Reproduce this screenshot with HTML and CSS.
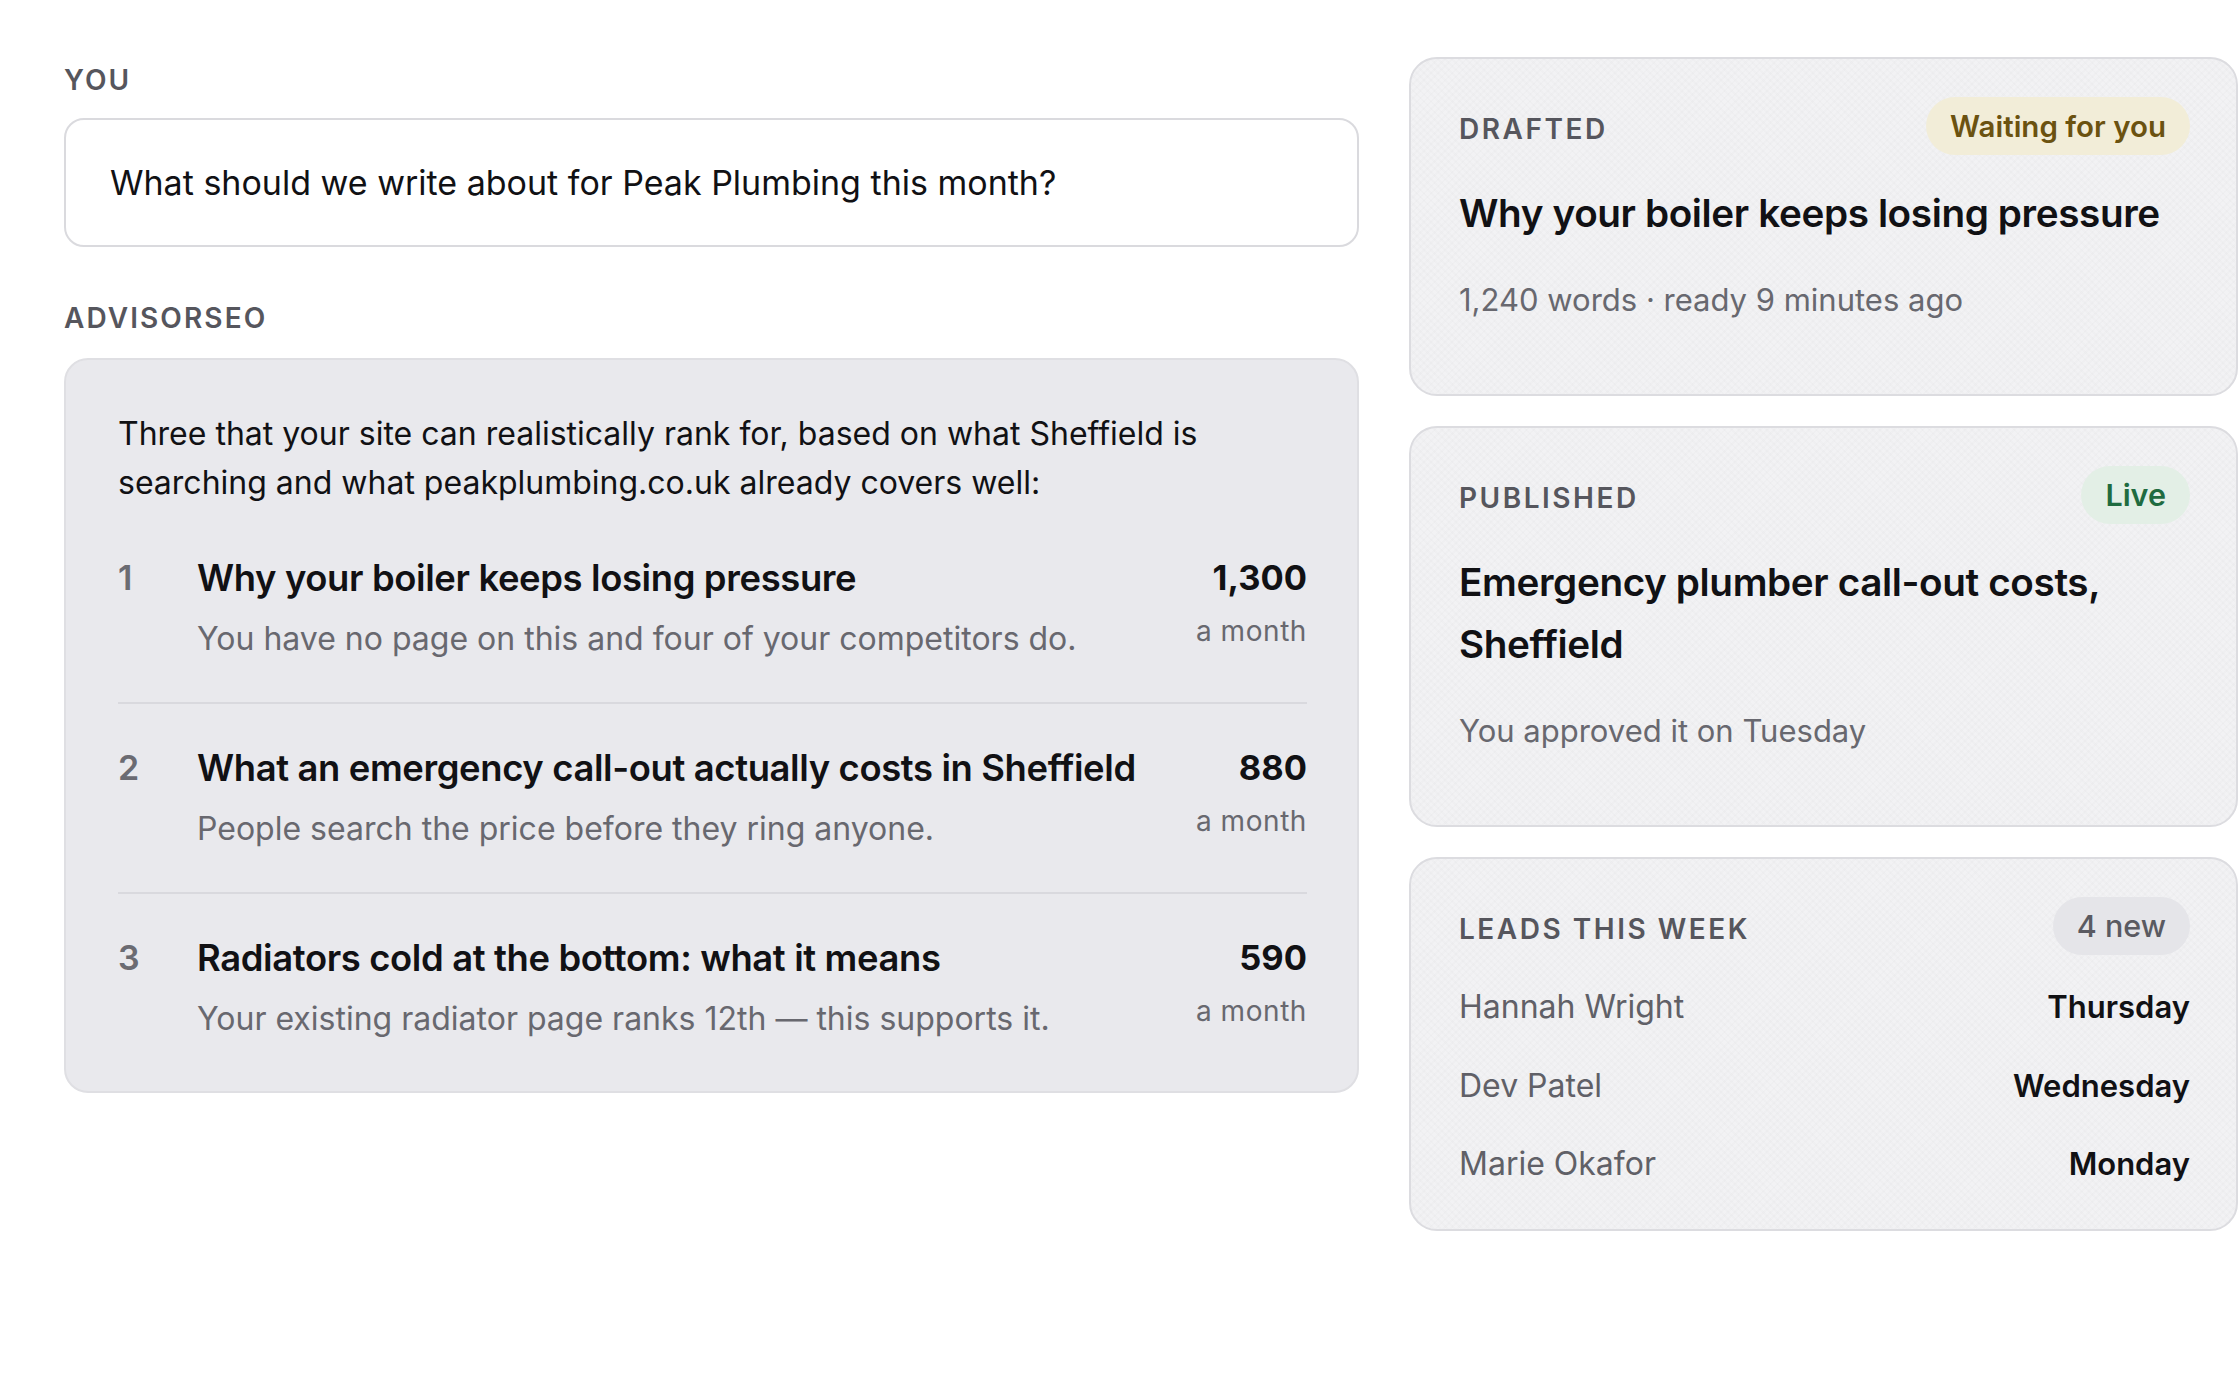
FILE: index.html
```html
<!DOCTYPE html>
<html lang="en">
<head>
    <meta charset="UTF-8">
    <meta name="viewport" content="width=device-width, initial-scale=1.0">
    <title>AdvisorSEO – Peak Plumbing</title>
    <link rel="stylesheet" href="styles.css">
</head>
<body>
    <div class="page">
        <main class="chat">
            <div class="who">You</div>
            <div class="bubble-you">What should we write about for Peak Plumbing this month?</div>

            <div class="who who-advisor">AdvisorSEO</div>
            <div class="bubble-advisor">
                <p class="intro">Three that your site can realistically rank for, based on what Sheffield is searching and what peakplumbing.co.uk already covers well:</p>
                <ol class="ideas">
                    <li class="idea">
                        <span class="idea-num">1</span>
                        <div class="idea-body">
                            <div class="idea-title">Why your boiler keeps losing pressure</div>
                            <div class="idea-note">You have no page on this and four of your competitors do.</div>
                        </div>
                        <div class="idea-volume">
                            <div class="volume">1,300</div>
                            <div class="per">a month</div>
                        </div>
                    </li>
                    <li class="idea">
                        <span class="idea-num">2</span>
                        <div class="idea-body">
                            <div class="idea-title">What an emergency call-out actually costs in Sheffield</div>
                            <div class="idea-note">People search the price before they ring anyone.</div>
                        </div>
                        <div class="idea-volume">
                            <div class="volume">880</div>
                            <div class="per">a month</div>
                        </div>
                    </li>
                    <li class="idea">
                        <span class="idea-num">3</span>
                        <div class="idea-body">
                            <div class="idea-title">Radiators cold at the bottom: what it means</div>
                            <div class="idea-note">Your existing radiator page ranks 12th — this supports it.</div>
                        </div>
                        <div class="idea-volume">
                            <div class="volume">590</div>
                            <div class="per">a month</div>
                        </div>
                    </li>
                </ol>
            </div>
        </main>

        <aside class="side">
            <section class="card">
                <div class="card-head">
                    <span class="card-label">Drafted</span>
                    <span class="pill pill-waiting">Waiting for you</span>
                </div>
                <h2 class="card-title">Why your boiler keeps losing pressure</h2>
                <p class="card-meta">1,240 words · ready 9 minutes ago</p>
            </section>

            <section class="card">
                <div class="card-head">
                    <span class="card-label">Published</span>
                    <span class="pill pill-live">Live</span>
                </div>
                <h2 class="card-title">Emergency plumber call-out costs, Sheffield</h2>
                <p class="card-meta">You approved it on Tuesday</p>
            </section>

            <section class="card">
                <div class="card-head">
                    <span class="card-label">Leads this week</span>
                    <span class="pill pill-count">4 new</span>
                </div>
                <ul class="leads">
                    <li class="lead"><span class="lead-name">Hannah Wright</span><span class="lead-day">Thursday</span></li>
                    <li class="lead"><span class="lead-name">Dev Patel</span><span class="lead-day">Wednesday</span></li>
                    <li class="lead"><span class="lead-name">Marie Okafor</span><span class="lead-day">Monday</span></li>
                </ul>
            </section>
        </aside>
    </div>
</body>
</html>
```

FILE: styles.css
```css
body {
    margin: 0;
    font-family: Inter, "Noto Sans", sans-serif;
    background-color: #ffffff;
    color: #111114;
}
.page {
    display: grid;
    grid-template-columns: 1fr 829px;
    gap: 50px;
    align-items: start;
    padding: 57px 2px 60px 64px;
}
.chat {
    padding-top: 6px;
}
.who {
    font-size: 28px;
    line-height: 34px;
    font-weight: 600;
    letter-spacing: 0.075em;
    text-transform: uppercase;
    color: #56565d;
    margin-bottom: 21px;
}
.who-advisor {
    margin-top: 54px;
    margin-bottom: 23px;
}
.bubble-you {
    border: 2px solid #dadade;
    border-radius: 20px;
    padding: 37px 44px;
    font-size: 34px;
    line-height: 51px;
    background: #ffffff;
}
.bubble-advisor {
    background: #e9e9ed;
    border: 2px solid #dfdfe3;
    border-radius: 24px;
    padding: 49px 50px 48px 52px;
}
.intro {
    margin: 0 0 7px;
    font-size: 32px;
    line-height: 49px;
}
.ideas {
    list-style: none;
    margin: 0;
    padding: 0;
}
.idea {
    display: flex;
    align-items: flex-start;
    padding: 39px 0;
    border-bottom: 2px solid #d9d9de;
}
.idea:last-child {
    border-bottom: none;
    padding-bottom: 0;
}
.idea-num {
    flex: none;
    width: 79px;
    font-size: 34px;
    line-height: 50px;
    font-weight: 600;
    color: #6b6b72;
}
.idea-body {
    flex: 1;
}
.idea-title {
    font-size: 36.4px;
    line-height: 50px;
    font-weight: 600;
    letter-spacing: -0.01em;
}
.idea-note {
    margin-top: 12px;
    font-size: 32px;
    line-height: 48px;
    color: #68686f;
}
.idea-volume {
    text-align: right;
}
.volume {
    font-size: 34.5px;
    line-height: 50px;
    font-weight: 700;
}
.per {
    margin-top: 8px;
    font-size: 28px;
    line-height: 40px;
    letter-spacing: 0.02em;
    color: #68686f;
}
.side {
    display: flex;
    flex-direction: column;
    gap: 30px;
}
.card {
    background-color: #f2f2f4;
    background-image:
        repeating-linear-gradient(45deg, rgba(0,0,0,0.01) 0 2px, transparent 2px 5px),
        repeating-linear-gradient(-45deg, rgba(0,0,0,0.01) 0 2px, transparent 2px 5px);
    border: 2px solid #dcdce0;
    border-radius: 28px;
    padding: 38px 46px 41px 48px;
}
.card-head {
    display: flex;
    justify-content: space-between;
    align-items: center;
    min-height: 58px;
}
.card-label {
    margin-top: 5px;
    font-size: 28px;
    font-weight: 600;
    letter-spacing: 0.09em;
    text-transform: uppercase;
    color: #56565d;
}
.pill {
    font-size: 29.5px;
    line-height: 34px;
    font-weight: 600;
    padding: 12px 24px;
    border-radius: 999px;
}
.pill-waiting {
    background: #f2edd8;
    color: #6b5210;
}
.pill-live {
    background: #e3efe6;
    color: #1f6b40;
    font-size: 30.5px;
}
.pill-count {
    background: #e5e5e9;
    color: #5a5a61;
    font-weight: 500;
    font-size: 30.5px;
}
.card-title {
    margin: 27px 0 0;
    font-size: 38.7px;
    line-height: 62px;
    font-weight: 600;
    letter-spacing: -0.01em;
}
.card-meta {
    margin: 32px 0 29px;
    font-size: 31px;
    line-height: 48px;
    color: #68686f;
}
.leads {
    list-style: none;
    margin: 28px 0 0;
    padding: 0;
    display: flex;
    flex-direction: column;
    gap: 30.5px;
}
.lead {
    display: flex;
    justify-content: space-between;
    align-items: baseline;
    line-height: 48px;
}
.lead-name {
    font-size: 32px;
    color: #606067;
}
.lead-day {
    font-size: 31px;
    font-weight: 600;
}
```
